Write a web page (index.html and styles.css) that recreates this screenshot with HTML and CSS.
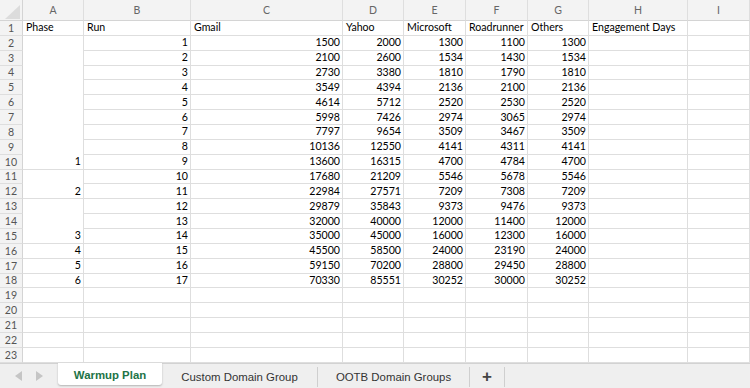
FILE: index.html
```html
<!DOCTYPE html>
<html>
<head>
<meta charset="utf-8">
<link rel="stylesheet" href="styles.css">
</head>
<body>
<div class="sheet">
  <div class="grid">
    <div class="corner"></div>
    <div class="ch">A</div><div class="ch">B</div><div class="ch">C</div><div class="ch">D</div><div class="ch">E</div><div class="ch">F</div><div class="ch">G</div><div class="ch">H</div><div class="ch">I</div>

    <div class="rh">1</div><div class="c">Phase</div><div class="c">Run</div><div class="c">Gmail</div><div class="c">Yahoo</div><div class="c">Microsoft</div><div class="c">Roadrunner</div><div class="c">Others</div><div class="c">Engagement Days</div><div class="c"></div>

    <div class="rh">2</div><div class="c n span9">1</div><div class="c n">1</div><div class="c n">1500</div><div class="c n">2000</div><div class="c n">1300</div><div class="c n">1100</div><div class="c n">1300</div><div class="c"></div><div class="c"></div>
    <div class="rh">3</div><div class="c n">2</div><div class="c n">2100</div><div class="c n">2600</div><div class="c n">1534</div><div class="c n">1430</div><div class="c n">1534</div><div class="c"></div><div class="c"></div>
    <div class="rh">4</div><div class="c n">3</div><div class="c n">2730</div><div class="c n">3380</div><div class="c n">1810</div><div class="c n">1790</div><div class="c n">1810</div><div class="c"></div><div class="c"></div>
    <div class="rh">5</div><div class="c n">4</div><div class="c n">3549</div><div class="c n">4394</div><div class="c n">2136</div><div class="c n">2100</div><div class="c n">2136</div><div class="c"></div><div class="c"></div>
    <div class="rh">6</div><div class="c n">5</div><div class="c n">4614</div><div class="c n">5712</div><div class="c n">2520</div><div class="c n">2530</div><div class="c n">2520</div><div class="c"></div><div class="c"></div>
    <div class="rh">7</div><div class="c n">6</div><div class="c n">5998</div><div class="c n">7426</div><div class="c n">2974</div><div class="c n">3065</div><div class="c n">2974</div><div class="c"></div><div class="c"></div>
    <div class="rh">8</div><div class="c n">7</div><div class="c n">7797</div><div class="c n">9654</div><div class="c n">3509</div><div class="c n">3467</div><div class="c n">3509</div><div class="c"></div><div class="c"></div>
    <div class="rh">9</div><div class="c n">8</div><div class="c n">10136</div><div class="c n">12550</div><div class="c n">4141</div><div class="c n">4311</div><div class="c n">4141</div><div class="c"></div><div class="c"></div>
    <div class="rh">10</div><div class="c n">9</div><div class="c n">13600</div><div class="c n">16315</div><div class="c n">4700</div><div class="c n">4784</div><div class="c n">4700</div><div class="c"></div><div class="c"></div>
    <div class="rh">11</div><div class="c n span2">2</div><div class="c n">10</div><div class="c n">17680</div><div class="c n">21209</div><div class="c n">5546</div><div class="c n">5678</div><div class="c n">5546</div><div class="c"></div><div class="c"></div>
    <div class="rh">12</div><div class="c n">11</div><div class="c n">22984</div><div class="c n">27571</div><div class="c n">7209</div><div class="c n">7308</div><div class="c n">7209</div><div class="c"></div><div class="c"></div>
    <div class="rh">13</div><div class="c n span3">3</div><div class="c n">12</div><div class="c n">29879</div><div class="c n">35843</div><div class="c n">9373</div><div class="c n">9476</div><div class="c n">9373</div><div class="c"></div><div class="c"></div>
    <div class="rh">14</div><div class="c n">13</div><div class="c n">32000</div><div class="c n">40000</div><div class="c n">12000</div><div class="c n">11400</div><div class="c n">12000</div><div class="c"></div><div class="c"></div>
    <div class="rh">15</div><div class="c n">14</div><div class="c n">35000</div><div class="c n">45000</div><div class="c n">16000</div><div class="c n">12300</div><div class="c n">16000</div><div class="c"></div><div class="c"></div>
    <div class="rh">16</div><div class="c n">4</div><div class="c n">15</div><div class="c n">45500</div><div class="c n">58500</div><div class="c n">24000</div><div class="c n">23190</div><div class="c n">24000</div><div class="c"></div><div class="c"></div>
    <div class="rh">17</div><div class="c n">5</div><div class="c n">16</div><div class="c n">59150</div><div class="c n">70200</div><div class="c n">28800</div><div class="c n">29450</div><div class="c n">28800</div><div class="c"></div><div class="c"></div>
    <div class="rh">18</div><div class="c n">6</div><div class="c n">17</div><div class="c n">70330</div><div class="c n">85551</div><div class="c n">30252</div><div class="c n">30000</div><div class="c n">30252</div><div class="c"></div><div class="c"></div>

    <div class="rh">19</div><div class="c"></div><div class="c"></div><div class="c"></div><div class="c"></div><div class="c"></div><div class="c"></div><div class="c"></div><div class="c"></div><div class="c"></div>
    <div class="rh">20</div><div class="c"></div><div class="c"></div><div class="c"></div><div class="c"></div><div class="c"></div><div class="c"></div><div class="c"></div><div class="c"></div><div class="c"></div>
    <div class="rh">21</div><div class="c"></div><div class="c"></div><div class="c"></div><div class="c"></div><div class="c"></div><div class="c"></div><div class="c"></div><div class="c"></div><div class="c"></div>
    <div class="rh">22</div><div class="c"></div><div class="c"></div><div class="c"></div><div class="c"></div><div class="c"></div><div class="c"></div><div class="c"></div><div class="c"></div><div class="c"></div>
    <div class="rh">23</div><div class="c"></div><div class="c"></div><div class="c"></div><div class="c"></div><div class="c"></div><div class="c"></div><div class="c"></div><div class="c"></div><div class="c"></div>
  </div>

  <div class="tabbar">
    <div class="nav">
      <svg class="arrow" width="7" height="10" viewBox="0 0 7 10"><polygon points="7,0 7,10 0,5" fill="#c5c5c5"/></svg>
      <svg class="arrow" width="7" height="10" viewBox="0 0 7 10"><polygon points="0,0 0,10 7,5" fill="#c5c5c5"/></svg>
    </div>
    <div class="tab active">Warmup Plan</div>
    <div class="tab t2">Custom Domain Group</div>
    <div class="tab t3">OOTB Domain Groups</div>
    <div class="tab plus">+</div>
  </div>
</div>
</body>
</html>
```

FILE: styles.css
```css
html, body {
  margin: 0;
  padding: 0;
  background: #ffffff;
  overflow: hidden;
}

.sheet {
  width: 750px;
  height: 388px;
  display: flex;
  flex-direction: column;
}

.grid {
  display: grid;
  grid-template-columns: 23px 61px 107px 152px 61px 62px 62px 61px 99px 62px;
  grid-template-rows: 21px repeat(23, 14.87px);
  font-family: Lato, "Liberation Sans", sans-serif;
  font-size: 10.6px;
  color: #000;
}

.grid > div {
  box-sizing: border-box;
  border-right: 1px solid #dedede;
  border-bottom: 1px solid #dedede;
  overflow: hidden;
  white-space: nowrap;
}

.corner {
  background: #f3f3f3;
  position: relative;
  border-right-color: #d4d4d4 !important;
  border-bottom-color: #d4d4d4 !important;
}

.corner::after {
  content: "";
  position: absolute;
  left: 5px;
  top: 5px;
  width: 15px;
  height: 14px;
  background: #dcdcdc;
  clip-path: polygon(100% 0, 100% 100%, 0 100%);
}

.ch {
  background: #f3f3f3;
  color: #666;
  text-align: center;
  line-height: 20px;
  font-size: 10.5px;
  border-bottom-color: #d4d4d4 !important;
}

.rh {
  background: #f3f3f3;
  color: #555;
  text-align: center;
  display: flex;
  align-items: flex-end;
  justify-content: center;
  line-height: 14px;
  border-right-color: #d4d4d4 !important;
}

.c {
  display: flex;
  align-items: flex-end;
  padding: 0 2px 0 3px;
  line-height: 13.5px;
}

.n {
  justify-content: flex-end;
}

.span9 { grid-row: span 9; }
.span3 { grid-row: span 3; }
.span2 { grid-row: span 2; }

.tabbar {
  flex: 1;
  background: #efefef;
  border-top: 1px solid #d2d2d2;
  display: flex;
  align-items: flex-start;
  font-family: "Liberation Sans", Arial, sans-serif;
  font-size: 11.4px;
  color: #333;
}

.nav {
  width: 58px;
  height: 24px;
  display: flex;
  align-items: center;
  padding-left: 15px;
  box-sizing: border-box;
  gap: 14px;
}

.tab {
  height: 20px;
  margin-top: 3px;
  display: flex;
  align-items: center;
  justify-content: center;
  box-sizing: border-box;
  border-right: 1px solid #cfcfcf;
}

.tab.active {
  width: 104px;
  height: 22px;
  margin-top: -1px;
  background: #ffffff;
  color: #217346;
  font-weight: bold;
  border-right: none;
  border-radius: 0 0 3px 3px;
  box-shadow: 0 1px 2px rgba(0, 0, 0, 0.25);
  padding-top: 3px;
}

.t2 { width: 156px; }
.t3 { width: 152px; }

.tab.plus {
  width: 35px;
  font-size: 17px;
  font-weight: bold;
  color: #444;
}
```
